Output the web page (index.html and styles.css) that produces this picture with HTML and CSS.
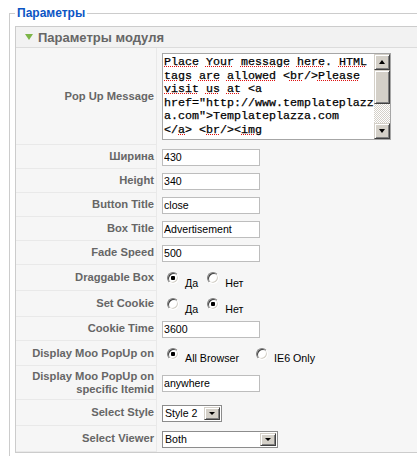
FILE: index.html
```html
<!DOCTYPE html>
<html lang="ru">
<head>
<meta charset="utf-8">
<title>Параметры</title>
<link rel="stylesheet" href="styles.css">
</head>
<body>
<fieldset class="adminform">
  <legend>Параметры</legend>
  <div class="panel">
    <h3 class="pane-title"><span class="arrow"></span><span>Параметры модуля</span></h3>
    <div class="params">
      <div class="row r-msg">
        <div class="key">Pop Up Message</div>
        <div class="val">
          <div class="textarea">
            <div class="ta-text"><span class="sp">Place</span> <span class="sp">Your</span> <span class="sp">message</span> <span class="sp">here</span>. <span class="sp">HTML</span>
<span class="sp">tags</span> <span class="sp">are</span> <span class="sp">allowed</span> &lt;<span class="sp">br</span>/&gt;<span class="sp">Please</span>
<span class="sp">visit</span> <span class="sp">us</span> <span class="sp">at</span> &lt;a
href="http://www.templateplazz
a.com"&gt;Templateplazza.com
&lt;/<span class="sp">a</span>&gt; &lt;<span class="sp">br</span>/&gt;&lt;<span class="sp">img</span></div>
            <div class="scrollbar">
              <span class="sb-btn"><span class="tri-up"></span></span>
              <span class="sb-thumb"></span>
              <span class="sb-track"></span>
              <span class="sb-btn"><span class="tri-down"></span></span>
            </div>
          </div>
        </div>
      </div>
      <div class="row r-text">
        <div class="key">Ширина</div>
        <div class="val"><input class="inp" type="text" value="430"></div>
      </div>
      <div class="row r-text">
        <div class="key">Height</div>
        <div class="val"><input class="inp" type="text" value="340"></div>
      </div>
      <div class="row r-text">
        <div class="key">Button Title</div>
        <div class="val"><input class="inp" type="text" value="close"></div>
      </div>
      <div class="row r-text">
        <div class="key">Box Title</div>
        <div class="val"><input class="inp" type="text" value="Advertisement"></div>
      </div>
      <div class="row r-text">
        <div class="key">Fade Speed</div>
        <div class="val"><input class="inp" type="text" value="500"></div>
      </div>
      <div class="row r-radio">
        <div class="key">Draggable Box</div>
        <div class="val">
          <span class="opt"><span class="radio on"></span><span class="otext">Да</span></span>
          <span class="opt"><span class="radio"></span><span class="otext">Нет</span></span>
        </div>
      </div>
      <div class="row r-radio">
        <div class="key">Set Cookie</div>
        <div class="val">
          <span class="opt"><span class="radio"></span><span class="otext">Да</span></span>
          <span class="opt"><span class="radio on"></span><span class="otext">Нет</span></span>
        </div>
      </div>
      <div class="row r-text">
        <div class="key">Cookie Time</div>
        <div class="val"><input class="inp" type="text" value="3600"></div>
      </div>
      <div class="row r-disp">
        <div class="key">Display Moo PopUp on</div>
        <div class="val">
          <span class="opt wide"><span class="radio on"></span><span class="otext">All Browser</span></span>
          <span class="opt"><span class="radio"></span><span class="otext">IE6 Only</span></span>
        </div>
      </div>
      <div class="row r-two">
        <div class="key">Display Moo PopUp on<br>specific Itemid</div>
        <div class="val"><input class="inp" type="text" value="anywhere"></div>
      </div>
      <div class="row r-sel">
        <div class="key">Select Style</div>
        <div class="val"><span class="select s-short"><span class="sel-val">Style 2</span><span class="sel-btn"><span class="tri-down"></span></span></span></div>
      </div>
      <div class="row r-sel">
        <div class="key">Select Viewer</div>
        <div class="val"><span class="select s-long"><span class="sel-val">Both</span><span class="sel-btn"><span class="tri-down"></span></span></span></div>
      </div>
    </div>
  </div>
</fieldset>
</body>
</html>
```
FILE: styles.css
```css
html, body {
  margin: 0;
  padding: 0;
  overflow: hidden;
  background: #fff;
}

body {
  font-family: "Liberation Sans", Arial, sans-serif;
  font-size: 11px;
  color: #333;
}

.adminform {
  margin: 6px 0 0 9px;
  padding: 5px 5px 10px 5px;
  border: 1px solid #cccccc;
  width: 600px;
  min-width: 0;
}

.adminform legend {
  margin: 0;
  padding: 0 2px;
  font-size: 12px;
  line-height: 15px;
  font-weight: bold;
  color: #0b55c4;
}

.panel {
  border: 1px solid #cccccc;
}

.pane-title {
  margin: 0;
  height: 20px;
  border-bottom: 1px solid #dcdcdc;
  background: #f2f2f2;
  color: #666;
  font-size: 13px;
  font-weight: bold;
  display: flex;
  align-items: center;
  padding-left: 9px;
  gap: 5px;
}

.arrow {
  width: 0;
  height: 0;
  border-left: 4px solid transparent;
  border-right: 4px solid transparent;
  border-top: 6px solid #7cb548;
}

.row {
  display: grid;
  grid-template-columns: 141px 1fr;
}

.r-msg { height: 97px; }
.r-text { height: 24px; }
.r-radio { height: 26px; }
.r-disp { height: 25px; }
.r-two { height: 34px; }
.r-sel { height: 26px; }

.key {
  box-sizing: border-box;
  background: #f6f6f6;
  border-right: 1px solid #e9e9e9;
  border-bottom: 1px solid #e9e9e9;
  color: #666;
  font-weight: bold;
  font-size: 11.2px;
  line-height: 13px;
  text-align: right;
  display: flex;
  align-items: center;
  justify-content: flex-end;
  padding-right: 2px;
}

.val {
  background: #f6f6f6;
  display: flex;
  align-items: center;
  padding-left: 5px;
}

.inp {
  box-sizing: border-box;
  width: 98px;
  height: 17px;
  margin: 0;
  padding: 0 1px;
  border: 1px solid #bdbdbd;
  background: #fff;
  color: #000;
  font-family: "Liberation Sans", Arial, sans-serif;
  font-size: 10.6px;
  outline: none;
}

/* textarea */
.textarea {
  box-sizing: border-box;
  width: 229px;
  height: 87px;
  border: 1px solid #a6a6a6;
  background: #fff;
  display: flex;
  justify-content: space-between;
}

.ta-text {
  white-space: pre;
  font-family: "Liberation Mono", "Courier New", monospace;
  font-size: 11.67px;
  line-height: 13.6px;
  color: #000;
  -webkit-text-stroke: 0.25px #000;
  padding: 2px 0 0 1px;
  overflow: hidden;
}

.sp {
  text-decoration: underline dotted #e01010;
  text-decoration-thickness: 1px;
  text-underline-offset: 1px;
}

.scrollbar {
  width: 16px;
  display: flex;
  flex-direction: column;
}

.sb-btn, .sb-thumb, .sel-btn {
  box-sizing: border-box;
  background: #d4d0c8;
  border: 1px solid;
  border-color: #d4d0c8 #404040 #404040 #d4d0c8;
  box-shadow: inset 1px 1px #fff, inset -1px -1px #808080;
}

.sb-btn {
  height: 16px;
  display: flex;
  align-items: center;
  justify-content: center;
}

.sb-thumb {
  height: 34px;
}

.sb-track {
  flex: 1;
  background: repeating-conic-gradient(#ffffff 0 25%, #d4d0c8 0 50%) 0 0 / 2px 2px;
}

.tri-up {
  width: 0;
  height: 0;
  border-left: 3.5px solid transparent;
  border-right: 3.5px solid transparent;
  border-bottom: 4px solid #000;
}

.tri-down {
  width: 0;
  height: 0;
  border-left: 3.5px solid transparent;
  border-right: 3.5px solid transparent;
  border-top: 4px solid #000;
}

/* radios */
.opt {
  display: flex;
  align-items: center;
  margin-left: 5px;
}

.opt + .opt {
  margin-left: 9px;
}

.opt.wide {
  margin-right: 8px;
}

.radio {
  box-sizing: border-box;
  width: 12px;
  height: 12px;
  border-radius: 50%;
  border: 1px solid;
  border-color: #808080 #ffffff #ffffff #808080;
  box-shadow: inset 1px 1px #404040, inset -1px -1px #d4d0c8;
  background: #fff;
}

.radio.on {
  background: radial-gradient(circle, #000 0 2px, #fff 2.5px);
}

.otext {
  margin-left: 6px;
  padding-top: 9px;
  font-size: 10.7px;
  color: #000;
}

/* selects */
.select {
  box-sizing: border-box;
  height: 17px;
  border: 1px solid #8c8c8c;
  background: #fff;
  display: flex;
  align-items: stretch;
  padding: 1px;
}

.s-short { width: 60px; }
.s-long { width: 116px; }

.sel-val {
  flex: 1;
  font-size: 10.6px;
  color: #000;
  line-height: 13px;
  padding-left: 1px;
}

.sel-btn {
  width: 16px;
  display: flex;
  align-items: center;
  justify-content: center;
}

.sel-btn .tri-down {
  border-left-width: 3px;
  border-right-width: 3px;
  border-top-width: 3px;
}
```
